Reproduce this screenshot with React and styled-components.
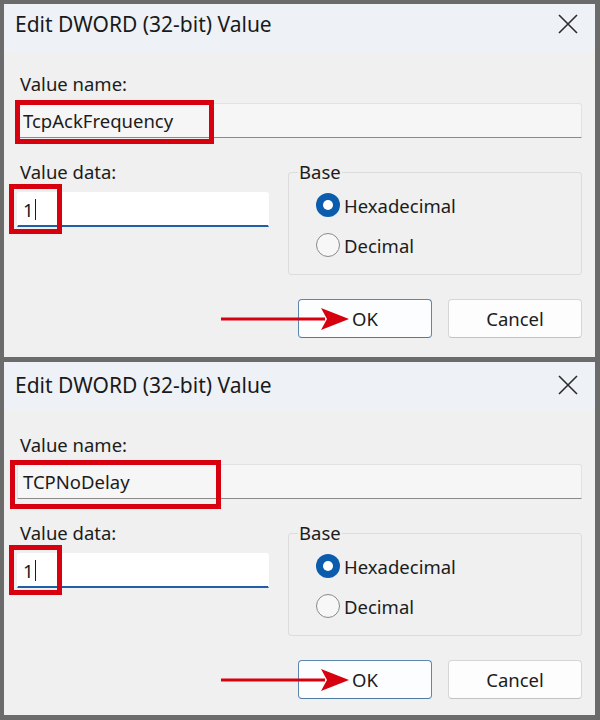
import React from 'react';
import styled, { createGlobalStyle } from 'styled-components';

const GlobalStyle = createGlobalStyle`
  html, body {
    margin: 0;
    padding: 0;
    background: #6b6b6b;
  }
  * {
    box-sizing: border-box;
  }
`;

const Page = styled.div`
  width: 600px;
  height: 720px;
  background: #6b6b6b;
  padding: 4px 5px 5px 4px;
  display: flex;
  flex-direction: column;
  gap: 5px;
  font-family: "Noto Sans", "Open Sans", sans-serif;
  color: #1c1c1c;
`;

const Dialog = styled.div`
  height: 353px;
  background: #f0f0f0;
  display: flex;
  flex-direction: column;
`;

const TitleBar = styled.div`
  height: 48px;
  flex-shrink: 0;
  background: #eef2f7;
  display: flex;
  align-items: center;
  justify-content: space-between;
  padding: 0 16px ${p => 8 - 2 * (p.$shift || 0)}px 11px;
`;

const Title = styled.span`
  font-size: 21px;
  color: #1a1a1a;
`;

const CloseButton = styled.button`
  width: 22px;
  height: 22px;
  padding: 0;
  border: none;
  background: transparent;
  display: flex;
  align-items: center;
  justify-content: center;
`;

const Body = styled.div`
  flex: 1;
  padding: ${p => 19 + (p.$shift || 0)}px 13px 0 13px;
  display: flex;
  flex-direction: column;
  position: relative;
`;

const Label = styled.div`
  font-size: 18.5px;
  line-height: 25px;
  padding-left: 3px;
  color: #1c1c1c;
`;

const Field = styled.div`
  position: relative;
  height: 35px;
  margin-top: ${p => p.$gap || 8}px;
  display: flex;
  align-items: center;
  padding-left: 5px;
  font-size: 18.5px;
  background: ${p => (p.$readOnly ? '#f6f6f6' : '#ffffff')};
  border: 1px solid ${p => (p.$readOnly ? '#e2e2e2' : '#ffffff')};
  border-bottom: ${p => (p.$readOnly ? '1px solid #8a8a8a' : '2px solid #1f5fa8')};
  border-radius: 3px 3px 0 0;
`;

const Caret = styled.span`
  display: inline-block;
  width: 1px;
  height: 21px;
  margin-left: 1px;
  background: #1c1c1c;
`;

const Highlight = styled.div`
  position: absolute;
  left: ${p => p.$left}px;
  top: ${p => p.$top}px;
  width: ${p => p.$width}px;
  height: ${p => p.$height}px;
  border: 5px solid #d7000f;
  pointer-events: none;
`;

const DataRow = styled.div`
  display: grid;
  grid-template-columns: 252px 1fr;
  column-gap: 19px;
  margin-top: 21px;
`;

const DataColumn = styled.div`
  display: flex;
  flex-direction: column;
`;

const GroupBox = styled.fieldset`
  margin: 0;
  padding: 0;
  border: 1px solid #dcdcdc;
  border-radius: 3px;
  height: 116px;
`;

const Legend = styled.legend`
  font-size: 18.5px;
  padding: 0 1px;
  margin-left: 9px;
  line-height: 26px;
`;

const RadioList = styled.div`
  display: flex;
  flex-direction: column;
  gap: 16px;
  padding: 8px 0 0 27px;
`;

const RadioRow = styled.label`
  display: flex;
  align-items: center;
  gap: 4px;
  font-size: 18.5px;
  height: 24px;
`;

const RadioCircle = styled.span`
  width: 24px;
  height: 24px;
  border-radius: 50%;
  flex-shrink: 0;
  display: flex;
  align-items: center;
  justify-content: center;
  background: ${p => (p.$checked ? '#0b5cad' : '#f7f7f7')};
  border: ${p => (p.$checked ? 'none' : '1.5px solid #8a8a8a')};

  &::after {
    content: '';
    display: ${p => (p.$checked ? 'block' : 'none')};
    width: 10px;
    height: 10px;
    border-radius: 50%;
    background: #ffffff;
  }
`;

const ButtonRow = styled.div`
  display: flex;
  justify-content: flex-end;
  gap: 16px;
  margin-top: 24px;
  position: relative;
`;

const Button = styled.button`
  width: 134px;
  height: 39px;
  font-family: inherit;
  font-size: 18.5px;
  color: #1c1c1c;
  background: ${p => (p.$primary ? '#fbfdff' : '#fdfdfd')};
  border: 1px solid ${p => (p.$primary ? '#5d86ae' : '#d6d6d6')};
  border-bottom-color: ${p => (p.$primary ? '#4f7aa3' : '#c2c2c2')};
  border-radius: 4px;
`;

const Arrow = styled.svg`
  position: absolute;
  left: 204px;
  top: 6px;
  pointer-events: none;
`;

function CloseIcon() {
  return (
    <svg width="20" height="20" viewBox="0 0 20 20">
      <path d="M1 1 L19 19 M19 1 L1 19" stroke="#2b2b2b" strokeWidth="1.6" fill="none" />
    </svg>
  );
}

function RedArrow() {
  return (
    <Arrow width="130" height="28" viewBox="0 0 130 28">
      <path d="M0 14 L104 14" stroke="#d7000f" strokeWidth="3" />
      <path d="M100 3 L128 14 L100 25 L106 14 Z" fill="#d7000f" />
    </Arrow>
  );
}

function EditDword({ name, nameBox, dataBox, shift }) {
  return (
    <Dialog>
      <TitleBar $shift={shift}>
        <Title>Edit DWORD (32-bit) Value</Title>
        <CloseButton aria-label="Close">
          <CloseIcon />
        </CloseButton>
      </TitleBar>
      <Body $shift={shift}>
        <Label>Value name:</Label>
        <Field $readOnly $gap={7}>
          {name}
          <Highlight {...nameBox} />
        </Field>
        <DataRow>
          <DataColumn>
            <Label>Value data:</Label>
            <Field $gap={8}>
              1<Caret />
              <Highlight {...dataBox} />
            </Field>
          </DataColumn>
          <GroupBox>
            <Legend>Base</Legend>
            <RadioList>
              <RadioRow>
                <RadioCircle $checked />
                Hexadecimal
              </RadioRow>
              <RadioRow>
                <RadioCircle />
                Decimal
              </RadioRow>
            </RadioList>
          </GroupBox>
        </DataRow>
        <ButtonRow>
          <RedArrow />
          <Button $primary>OK</Button>
          <Button>Cancel</Button>
        </ButtonRow>
      </Body>
    </Dialog>
  );
}

export default function App() {
  return (
    <>
      <GlobalStyle />
      <Page>
        <EditDword
          name="TcpAckFrequency"
          shift={0}
          nameBox={{ $left: -3, $top: -4, $width: 199, $height: 44 }}
          dataBox={{ $left: -9, $top: -9, $width: 53, $height: 50 }}
        />
        <EditDword
          name="TCPNoDelay"
          shift={3}
          nameBox={{ $left: -8, $top: -5, $width: 211, $height: 49 }}
          dataBox={{ $left: -9, $top: -9, $width: 53, $height: 50 }}
        />
      </Page>
    </>
  );
}
